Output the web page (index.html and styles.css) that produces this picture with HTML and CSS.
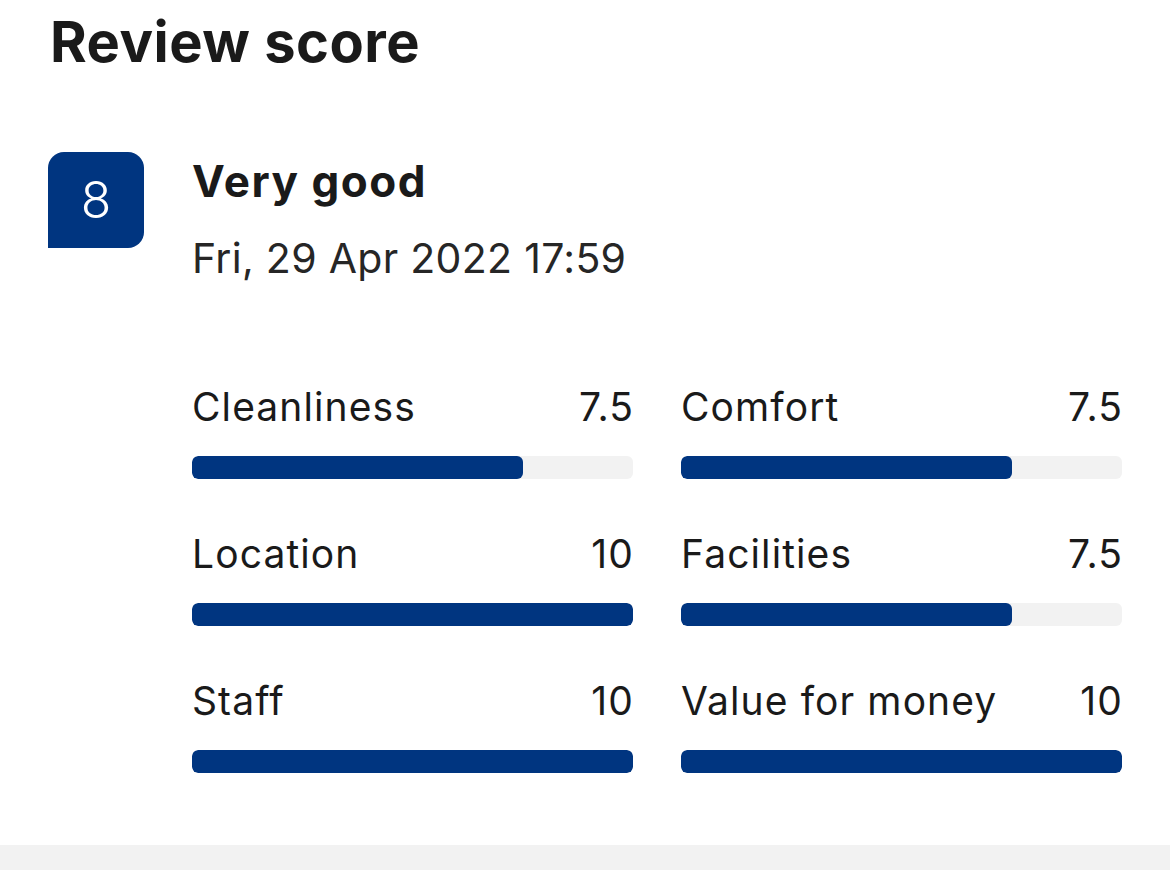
FILE: index.html
```html
<!DOCTYPE html>
<html lang="en">
<head>
  <meta charset="UTF-8" />
  <title>Review score</title>
  <link rel="stylesheet" href="styles.css">
</head>
<body>

  <h1 class="title">Review score</h1>

  <div class="review">
    <div class="badge">8</div>

    <div class="details">
      <div class="verdict">Very good</div>
      <div class="date">Fri, 29 Apr 2022 17:59</div>

      <div class="scores">
        <div class="score">
          <div class="score-head"><span>Cleanliness</span><span>7.5</span></div>
          <div class="bar"><div class="fill" style="width: 75%"></div></div>
        </div>
        <div class="score">
          <div class="score-head"><span>Comfort</span><span>7.5</span></div>
          <div class="bar"><div class="fill" style="width: 75%"></div></div>
        </div>
        <div class="score">
          <div class="score-head"><span>Location</span><span>10</span></div>
          <div class="bar"><div class="fill" style="width: 100%"></div></div>
        </div>
        <div class="score">
          <div class="score-head"><span>Facilities</span><span>7.5</span></div>
          <div class="bar"><div class="fill" style="width: 75%"></div></div>
        </div>
        <div class="score">
          <div class="score-head"><span>Staff</span><span>10</span></div>
          <div class="bar"><div class="fill" style="width: 100%"></div></div>
        </div>
        <div class="score">
          <div class="score-head"><span>Value for money</span><span>10</span></div>
          <div class="bar"><div class="fill" style="width: 100%"></div></div>
        </div>
      </div>
    </div>
  </div>

  <div class="divider"></div>

</body>
</html>
```

FILE: styles.css
```css
body {
  margin: 0;
  background-color: white;
  color: #1a1a1a;
  font-family: Inter, "Noto Sans", sans-serif;
}

.title {
  margin: 0;
  padding: 9px 0 0 50px;
  font-size: 56px;
  line-height: 67px;
  font-weight: 700;
  letter-spacing: 0.5px;
}

.review {
  display: flex;
  gap: 48px;
  padding: 76px 48px 0 48px;
}

.badge {
  flex: none;
  width: 96px;
  height: 96px;
  display: flex;
  align-items: center;
  justify-content: center;
  background-color: #003580;
  color: white;
  font-size: 50px;
  font-weight: 300;
  border-radius: 16px 16px 16px 0;
}

.details {
  flex: 1;
  padding-top: 3px;
}

.verdict {
  font-size: 44px;
  line-height: 53px;
  font-weight: 700;
  letter-spacing: 1.5px;
}

.date {
  margin-top: 26px;
  font-size: 41px;
  line-height: 49px;
  color: #262626;
  letter-spacing: 0.3px;
}

.scores {
  display: grid;
  grid-template-columns: 1fr 1fr;
  column-gap: 48px;
  row-gap: 52px;
  margin-top: 101px;
}

.score-head {
  display: flex;
  justify-content: space-between;
  font-size: 39px;
  line-height: 46px;
  letter-spacing: 1.1px;
  margin-right: -1px;
}

.bar {
  margin-top: 26px;
  height: 23px;
  border-radius: 6px;
  background-color: #f2f2f2;
  overflow: hidden;
}

.fill {
  height: 100%;
  background-color: #003580;
  border-radius: 6px;
}

.divider {
  margin-top: 72px;
  height: 25px;
  background-color: #f2f2f2;
}
```
